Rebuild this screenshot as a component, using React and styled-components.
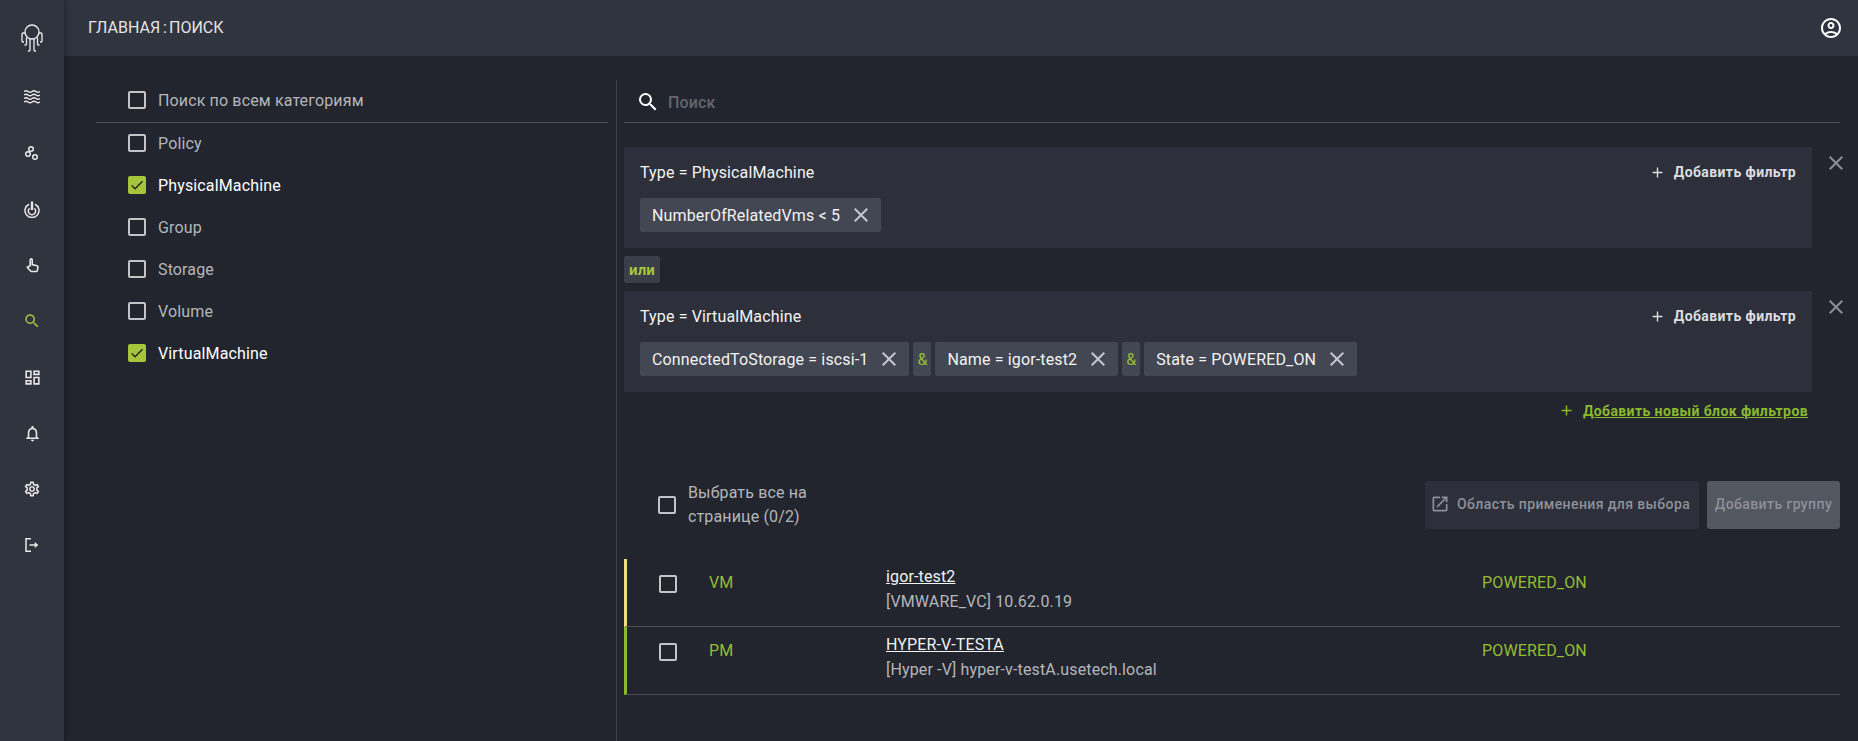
import React from 'react';
import styled, { createGlobalStyle } from 'styled-components';
import {
  MdSearch,
  MdClose,
  MdAdd,
  MdOpenInNew,
  MdCheck,
  MdOutlineAccountCircle,
  MdOutlineDashboard,
  MdOutlineNotifications,
  MdOutlineSettings,
} from 'react-icons/md';

const Global = createGlobalStyle`
  html, body { margin: 0; padding: 0; height: 100%; background: #22252e; }
  body { font-family: Roboto, "Noto Sans", sans-serif; letter-spacing: 0.14px; overflow: hidden; }
  #root { height: 100%; }
`;

const Logo = () => (
  <svg width="24" height="29" viewBox="0 0 24 29" fill="none" stroke="#ececec" strokeWidth="1.3">
    <circle cx="12" cy="8" r="7" />
    <path d="M5 9H3a1 1 0 0 0-1 1v7a1 1 0 0 0 1 1h1M19 9h2a1 1 0 0 1 1 1v7a1 1 0 0 1-1 1h-1" />
    <path d="M6.5 13.5V20a1 1 0 0 1-1 1H4.5M17.5 13.5V20a1 1 0 0 0 1 1h1" />
    <path d="M10 15v11a1 1 0 0 1-1 1H8M14 15v11a1 1 0 0 0 1 1h1" />
  </svg>
);

const WaveLines = () => (
  <svg width="16" height="14" viewBox="0 0 16 14" fill="none" stroke="#e8e8e8" strokeWidth="1.4">
    <path d="M0 1.5q2-1.5 4 0t4 0 4 0 4 0" />
    <path d="M0 5q2-1.5 4 0t4 0 4 0 4 0" />
    <path d="M0 8.5q2-1.5 4 0t4 0 4 0 4 0" />
    <path d="M0 12q2-1.5 4 0t4 0 4 0 4 0" />
  </svg>
);

const Bubbles = () => (
  <svg width="16" height="16" viewBox="0 0 16 16" fill="none" stroke="#e8e8e8" strokeWidth="1.5">
    <circle cx="7" cy="4" r="2.3" />
    <circle cx="4" cy="9" r="2.3" />
    <circle cx="11" cy="12" r="2.3" />
  </svg>
);

const PowerTarget = () => (
  <svg width="16" height="17" viewBox="0 0 16 17" fill="none" stroke="#e8e8e8" strokeWidth="1.5">
    <path d="M5 3.2a7 7 0 1 0 6 0" />
    <path d="M5.6 7.2a3.7 3.7 0 1 0 4.8 0" />
    <path d="M8 .5V9" strokeWidth="2.4" />
  </svg>
);

const Pointer = () => (
  <svg width="13" height="15" viewBox="0 0 14 16" fill="none" stroke="#e8e8e8" strokeWidth="1.7">
    <path d="M4.5 8V2a1 1 0 0 1 2.2 0v5l5 1.2c.8.2 1.3.9 1.1 1.7l-.6 3.6c-.1.6-.6 1-1.2 1H6c-.4 0-.8-.2-1-.5L1.6 10.5c-.5-.6.3-1.6 1-1.1z" />
  </svg>
);

const Exit = () => (
  <svg width="14" height="14" viewBox="0 0 14 14" fill="none" stroke="#e8e8e8" strokeWidth="1.5">
    <path d="M6 .8H1v12.4h5" />
    <path d="M4.5 7H12" />
    <path d="M10 4.6 13 7l-3 2.4z" fill="#e8e8e8" strokeWidth="0.6" />
  </svg>
);

const navItems = [
  { key: 'waves', icon: <WaveLines /> },
  { key: 'bubbles', icon: <Bubbles /> },
  { key: 'power', icon: <PowerTarget /> },
  { key: 'touch', icon: <Pointer /> },
  { key: 'search', icon: <MdSearch size={18} />, active: true },
  { key: 'dash', icon: <MdOutlineDashboard size={19} /> },
  { key: 'bell', icon: <MdOutlineNotifications size={19} /> },
  { key: 'gear', icon: <MdOutlineSettings size={18} /> },
  { key: 'logout', icon: <Exit /> },
];

const categories = [
  { name: 'Policy' },
  { name: 'PhysicalMachine', checked: true },
  { name: 'Group' },
  { name: 'Storage' },
  { name: 'Volume' },
  { name: 'VirtualMachine', checked: true },
];

const blocks = [
  { type: 'PhysicalMachine', chips: ['NumberOfRelatedVms < 5'] },
  { type: 'VirtualMachine', chips: ['ConnectedToStorage = iscsi-1', 'Name = igor-test2', 'State = POWERED_ON'] },
];

const results = [
  { kind: 'VM', name: 'igor-test2', info: '[VMWARE_VC] 10.62.0.19', accent: '#f1dc7c' },
  { kind: 'PM', name: 'HYPER-V-TESTA', info: '[Hyper -V] hyper-v-testA.usetech.local', accent: '#8ab82e' },
];

const App = () => (
  <Page>
    <Global />
    <Sidebar>
      <LogoSlot><Logo /></LogoSlot>
      {navItems.map((item) => (
        <NavItem key={item.key} $active={item.active}>{item.icon}</NavItem>
      ))}
    </Sidebar>
    <Main>
      <Header>
        <Crumbs>ГЛАВНАЯ<CrumbSep>:</CrumbSep>ПОИСК</Crumbs>
        <MdOutlineAccountCircle size={24} color="#fff" />
      </Header>
      <Body>
        <LeftPanel>
          <AllRow>
            <Box />
            <RowLabel>Поиск по всем категориям</RowLabel>
          </AllRow>
          {categories.map((c) => (
            <CategoryRow key={c.name}>
              <Box $checked={c.checked}>
                {c.checked && <MdCheck size={16} color="#22252e" />}
              </Box>
              <RowLabel $checked={c.checked}>{c.name}</RowLabel>
            </CategoryRow>
          ))}
        </LeftPanel>
        <RightPanel>
          <SearchBar>
            <MdSearch size={24} color="#fff" />
            <SearchText>Поиск</SearchText>
          </SearchBar>
          <Blocks>
            {blocks.map((block, i) => (
              <React.Fragment key={block.type}>
                {i > 0 && <OrChip>или</OrChip>}
                <BlockRow>
                  <Block>
                    <BlockHead>
                      <span>Type = {block.type}</span>
                      <AddFilter>
                        <MdAdd size={17} />
                        Добавить фильтр
                      </AddFilter>
                    </BlockHead>
                    <Chips>
                      {block.chips.map((chip, j) => (
                        <React.Fragment key={chip}>
                          {j > 0 && <AndChip>&amp;</AndChip>}
                          <Chip>
                            {chip}
                            <MdClose size={24} color="#c4c6ca" />
                          </Chip>
                        </React.Fragment>
                      ))}
                    </Chips>
                  </Block>
                  <BlockClose><MdClose size={24} color="#8b8e97" /></BlockClose>
                </BlockRow>
              </React.Fragment>
            ))}
          </Blocks>
          <AddBlockRow>
            <MdAdd size={17} />
            <AddBlockLink>Добавить новый блок фильтров</AddBlockLink>
          </AddBlockRow>
          <Toolbar>
            <SelectAll>
              <Box />
              <SelectText>Выбрать все на<br />странице (0/2)</SelectText>
            </SelectAll>
            <ScopeButton>
              <MdOpenInNew size={20} />
              <span>Область применения для выбора</span>
            </ScopeButton>
            <GroupButton>Добавить группу</GroupButton>
          </Toolbar>
          <Results>
            {results.map((r) => (
              <ResultRow key={r.name} $accent={r.accent}>
                <Box />
                <Kind>{r.kind}</Kind>
                <Names>
                  <ResultName>{r.name}</ResultName>
                  <ResultInfo>{r.info}</ResultInfo>
                </Names>
                <Status>POWERED_ON</Status>
              </ResultRow>
            ))}
          </Results>
        </RightPanel>
      </Body>
    </Main>
  </Page>
);

export default App;

const Page = styled.div`
  display: flex;
  height: 741px;
  background: #22252e;
`;

const Sidebar = styled.nav`
  width: 64px;
  flex: none;
  background: #30343f;
  display: flex;
  flex-direction: column;
  align-items: center;
  box-shadow: 2px 0 6px rgba(0, 0, 0, 0.3);
  position: relative;
  z-index: 2;
`;

const LogoSlot = styled.div`
  height: 69px;
  width: 100%;
  display: flex;
  align-items: center;
  justify-content: center;
  padding-top: 8px;
  box-sizing: border-box;
`;

const NavItem = styled.div`
  height: 56px;
  width: 100%;
  flex: none;
  display: flex;
  align-items: center;
  justify-content: center;
  color: ${(p) => (p.$active ? '#a5c63b' : '#e8e8e8')};
`;

const Main = styled.div`
  flex: 1;
  min-width: 0;
  display: flex;
  flex-direction: column;
`;

const Header = styled.header`
  height: 56px;
  flex: none;
  background: #30343f;
  display: flex;
  align-items: center;
  justify-content: space-between;
  padding: 0 15px 0 24px;
  box-sizing: border-box;
  color: #e4e4e4;
  font-size: 16px;
  letter-spacing: 0;
`;

const Crumbs = styled.div`
  display: flex;
  align-items: center;
  margin-top: -2px;
`;

const CrumbSep = styled.span`
  margin: 0 2px 0 3px;
`;

const Body = styled.div`
  flex: 1;
  display: flex;
  padding: 24px 18px 0 32px;
  min-height: 0;
`;

const LeftPanel = styled.div`
  width: 512px;
  flex: none;
`;

const AllRow = styled.div`
  height: 43px;
  margin-bottom: -1px;
  padding: 0 0 2px 32px;
  display: flex;
  align-items: center;
  gap: 12px;
  border-bottom: 1px solid #4b4e58;
  box-sizing: border-box;
`;

const CategoryRow = styled.div`
  height: 42px;
  display: flex;
  align-items: center;
  gap: 12px;
  padding-left: 32px;
`;

const Box = styled.span`
  width: 18px;
  height: 18px;
  flex: none;
  box-sizing: border-box;
  border-radius: 2px;
  border: ${(p) => (p.$checked ? 'none' : '2px solid #c3c4c7')};
  background: ${(p) => (p.$checked ? '#a5c63b' : 'transparent')};
  display: flex;
  align-items: center;
  justify-content: center;
`;

const RowLabel = styled.span`
  font-size: 16px;
  color: ${(p) => (p.$checked ? '#ffffff' : '#b5b6ba')};
`;

const RightPanel = styled.div`
  flex: 1;
  min-width: 0;
  margin-left: 8px;
  padding-left: 7px;
  border-left: 1px solid #3e414b;
`;

const SearchBar = styled.div`
  height: 43px;
  display: flex;
  align-items: center;
  gap: 8px;
  padding: 2px 0 0 12px;
  border-bottom: 1px solid #4b4e58;
  box-sizing: border-box;
`;

const SearchText = styled.span`
  font-size: 16px;
  font-weight: 500;
  color: #62656e;
`;

const Blocks = styled.div`
  margin-top: 24px;
  display: flex;
  flex-direction: column;
  align-items: flex-start;
  gap: 8px;
`;

const BlockRow = styled.div`
  align-self: stretch;
  display: flex;
`;

const Block = styled.div`
  flex: 1;
  height: 101px;
  background: #2d303a;
  padding: 16px 16px 0;
  box-sizing: border-box;
`;

const BlockHead = styled.div`
  display: flex;
  align-items: center;
  justify-content: space-between;
  height: 18px;
  font-size: 16px;
  color: #f4f4f4;
`;

const AddFilter = styled.span`
  display: flex;
  align-items: center;
  gap: 8px;
  font-size: 14px;
  font-weight: 700;
  letter-spacing: 0.4px;
  color: #dcdddf;
`;

const Chips = styled.div`
  display: flex;
  gap: 4px;
  margin-top: 17px;
`;

const Chip = styled.span`
  height: 34px;
  padding: 0 8px 0 12px;
  display: flex;
  align-items: center;
  gap: 9px;
  background: #434753;
  border-radius: 2px;
  color: #f2f2f2;
  font-size: 16px;
`;

const AndChip = styled.span`
  width: 18px;
  height: 34px;
  display: flex;
  align-items: center;
  justify-content: center;
  background: #434753;
  border-radius: 2px;
  color: #95bd32;
  font-size: 16px;
`;

const BlockClose = styled.div`
  width: 28px;
  flex: none;
  padding: 4px 0 0 12px;
  box-sizing: border-box;
`;

const OrChip = styled.span`
  width: 36px;
  height: 27px;
  display: flex;
  align-items: center;
  justify-content: center;
  background: #3a3e49;
  border-radius: 2px;
  color: #a5c63b;
  font-size: 15px;
  font-weight: 700;
`;

const AddBlockRow = styled.div`
  display: flex;
  align-items: center;
  justify-content: flex-end;
  gap: 8px;
  margin-top: 10px;
  height: 17px;
  padding-right: 32px;
  color: #8ab82e;
`;

const AddBlockLink = styled.span`
  font-size: 14px;
  font-weight: 700;
  letter-spacing: 0.4px;
  text-decoration: underline;
`;

const Toolbar = styled.div`
  display: flex;
  align-items: center;
  margin-top: 62px;
  height: 48px;
`;

const SelectAll = styled.div`
  flex: 1;
  display: flex;
  align-items: center;
  gap: 12px;
  padding-left: 34px;
`;

const SelectText = styled.span`
  font-size: 16px;
  line-height: 24px;
  color: #b5b6ba;
`;

const ScopeButton = styled.div`
  width: 274px;
  height: 48px;
  box-sizing: border-box;
  padding: 0 0 3px 5px;
  display: flex;
  align-items: center;
  gap: 7px;
  background: #2d303a;
  border-radius: 3px;
  font-size: 14px;
  font-weight: 500;
  letter-spacing: 0.4px;
  color: #8d909b;
  white-space: nowrap;
`;

const GroupButton = styled.div`
  width: 133px;
  height: 48px;
  margin-left: 8px;
  padding-bottom: 3px;
  box-sizing: border-box;
  display: flex;
  align-items: center;
  justify-content: center;
  background: #53575f;
  border-radius: 3px;
  font-size: 14px;
  font-weight: 500;
  letter-spacing: 0.4px;
  color: #8d909b;
  white-space: nowrap;
`;

const Results = styled.div`
  margin-top: 30px;
`;

const ResultRow = styled.div`
  height: 68px;
  display: flex;
  align-items: flex-start;
  box-sizing: border-box;
  border-left: 3px solid ${(p) => p.$accent};
  border-bottom: 1px solid #4b4e58;
  padding: 16px 0 0 32px;
`;

const Kind = styled.span`
  width: 177px;
  margin-left: 32px;
  margin-top: -1px;
  flex: none;
  color: #95bd32;
  font-size: 16px;
  line-height: 18px;
`;

const Names = styled.div`
  width: 596px;
  flex: none;
  margin-top: -8px;
`;

const ResultName = styled.div`
  font-size: 16px;
  line-height: 20px;
  color: #f2f2f2;
  text-decoration: underline;
`;

const ResultInfo = styled.div`
  font-size: 16px;
  line-height: 20px;
  margin-top: 5px;
  color: #b5b6ba;
`;

const Status = styled.span`
  color: #95bd32;
  font-size: 16px;
  line-height: 18px;
  margin-top: -1px;
`;
